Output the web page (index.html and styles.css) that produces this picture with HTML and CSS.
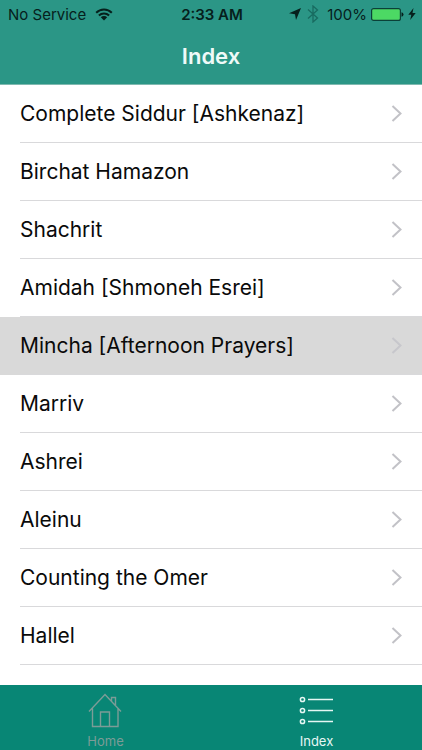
FILE: index.html
```html
<!DOCTYPE html>
<html lang="en">
<head>
    <meta charset="UTF-8">
    <meta name="viewport" content="width=device-width, initial-scale=1.0">
    <title>Index</title>
    <link rel="stylesheet" href="styles.css">
</head>
<body>
    <header class="header">
        <div class="status-bar">
            <div class="status-left">
                <span>No Service</span>
                <svg class="wifi" width="18" height="13" viewBox="0 0 18 13">
                    <path d="M1.200 4.800a11 11 0 0 1 15.600 0M3.900 7.500a7.200 7.200 0 0 1 10.200 0" fill="none" stroke="#06201c" stroke-width="2"/>
                    <path d="M9 12.500 5.800 9.300a4.600 4.600 0 0 1 6.400 0z" fill="#06201c"/>
                </svg>
            </div>
            <span class="time">2:33 AM</span>
            <div class="status-right">
                <svg width="12" height="12" viewBox="0 0 12 12">
                    <path d="M12 0 7 12 6 6.200 0 5.200z" fill="#06201c"/>
                </svg>
                <svg class="bluetooth" width="12" height="18" viewBox="0 0 12 18">
                    <path d="M1 4.500 10.500 13 6 17V1l4.500 4L1 13.500" fill="none" stroke="#186b60" stroke-width="1.300"/>
                </svg>
                <span>100%</span>
                <svg class="battery" width="33" height="13" viewBox="0 0 33 13">
                    <rect x=".6" y=".6" width="28.800" height="11.800" rx="2" fill="#4cd964" stroke="#0b4038" stroke-width="1.200"/>
                    <path d="M30.500 4.200q2 .3 2 2.300t-2 2.300z" fill="#06201c"/>
                </svg>
                <svg width="8" height="12" viewBox="0 0 8 12">
                    <path d="M5.500 0 .3 6.700h3L2.200 12 7.700 5H4.500z" fill="#06201c"/>
                </svg>
            </div>
        </div>
        <h1 class="title">Index</h1>
    </header>

    <main class="content">
        <ul class="list">
            <li><a class="row" href="#">Complete Siddur [Ashkenaz]<svg class="arrow" viewBox="0 0 12 18"><path d="M1.500 1 9.500 8.500 1.500 16"/></svg></a></li>
            <li><a class="row" href="#">Birchat Hamazon<svg class="arrow" viewBox="0 0 12 18"><path d="M1.500 1 9.500 8.500 1.500 16"/></svg></a></li>
            <li><a class="row" href="#">Shachrit<svg class="arrow" viewBox="0 0 12 18"><path d="M1.500 1 9.500 8.500 1.500 16"/></svg></a></li>
            <li><a class="row" href="#">Amidah [Shmoneh Esrei]<svg class="arrow" viewBox="0 0 12 18"><path d="M1.500 1 9.500 8.500 1.500 16"/></svg></a></li>
            <li class="selected"><a class="row" href="#">Mincha [Afternoon Prayers]<svg class="arrow" viewBox="0 0 12 18"><path d="M1.500 1 9.500 8.500 1.500 16"/></svg></a></li>
            <li><a class="row" href="#">Marriv<svg class="arrow" viewBox="0 0 12 18"><path d="M1.500 1 9.500 8.500 1.500 16"/></svg></a></li>
            <li><a class="row" href="#">Ashrei<svg class="arrow" viewBox="0 0 12 18"><path d="M1.500 1 9.500 8.500 1.500 16"/></svg></a></li>
            <li><a class="row" href="#">Aleinu<svg class="arrow" viewBox="0 0 12 18"><path d="M1.500 1 9.500 8.500 1.500 16"/></svg></a></li>
            <li><a class="row" href="#">Counting the Omer<svg class="arrow" viewBox="0 0 12 18"><path d="M1.500 1 9.500 8.500 1.500 16"/></svg></a></li>
            <li><a class="row" href="#">Hallel<svg class="arrow" viewBox="0 0 12 18"><path d="M1.500 1 9.500 8.500 1.500 16"/></svg></a></li>
        </ul>
    </main>

    <nav class="tabs">
        <a class="tab" href="#">
            <svg width="36" height="36" viewBox="0 0 36 36">
                <path d="M1 18.500 17 1.500l16 17M4.500 15.500V33.500h25.500V15.500M12.500 33.500V19h9V33.500M23.500 8V4.500h4V12" fill="none" stroke="currentColor" stroke-width="1.400"/>
            </svg>
            Home
        </a>
        <a class="tab active" href="#">
            <svg width="36" height="36" viewBox="0 0 36 36">
                <g fill="none" stroke="currentColor" stroke-width="1.500">
                    <circle cx="3.500" cy="6.500" r="2.100"/>
                    <circle cx="3.500" cy="17.500" r="2.100"/>
                    <circle cx="3.500" cy="28.500" r="2.100"/>
                    <path d="M9 6.500h25M9 17.500h25M9 28.500h25"/>
                </g>
            </svg>
            Index
        </a>
    </nav>
</body>
</html>
```

FILE: styles.css
```css
* {
  box-sizing: border-box;
}
body {
  margin: 0;
  height: 100vh;
  display: flex;
  flex-direction: column;
  font-family: Inter, "Liberation Sans", sans-serif;
  background-color: #fff;
  color: #0a0a0a;
}
a {
  color: inherit;
  text-decoration: none;
}
.header {
  flex: none;
  background-color: #2b9686;
  border-bottom: 1px solid #7fb9b0;
}
.status-bar {
  display: grid;
  grid-template-columns: 1fr auto 1fr;
  align-items: center;
  height: 28px;
  padding: 0 6px 0 8px;
  font-size: 15px;
  color: #06201c;
}
.status-left, .status-right {
  display: flex;
  align-items: center;
}
.status-left {
  gap: 9px;
}
.status-right {
  justify-content: flex-end;
  gap: 4px;
}
.bluetooth {
  margin: 0 4px 0 2px;
}
.time {
  font-weight: 600;
}
.title {
  margin: 0;
  height: 56px;
  line-height: 56px;
  text-align: center;
  font-size: 22px;
  font-weight: 600;
  color: #effaf8;
}
.content {
  flex: 1;
  min-height: 0;
  overflow: hidden;
}
.list {
  margin: 0;
  padding: 0;
  list-style: none;
}
.list li {
  padding-left: 20px;
}
.row {
  display: flex;
  align-items: center;
  justify-content: space-between;
  height: 58px;
  padding-right: 19px;
  border-bottom: 1px solid #d9d9db;
  font-size: 21px;
}
.arrow {
  width: 12px;
  height: 18px;
  fill: none;
  stroke: #c2c2c7;
  stroke-width: 2;
}
.list .selected {
  background-color: #d9d9d9;
}
.selected .arrow {
  stroke: #c7c7cc;
}
.tabs {
  flex: none;
  display: flex;
  height: 65px;
  background-color: #088675;
}
.tab {
  flex: 1;
  display: flex;
  flex-direction: column;
  align-items: center;
  gap: 4px;
  padding-top: 8px;
  font-size: 13px;
  line-height: 16px;
  color: #7c9c97;
}
.tab.active {
  color: #e6f7f4;
}
```
